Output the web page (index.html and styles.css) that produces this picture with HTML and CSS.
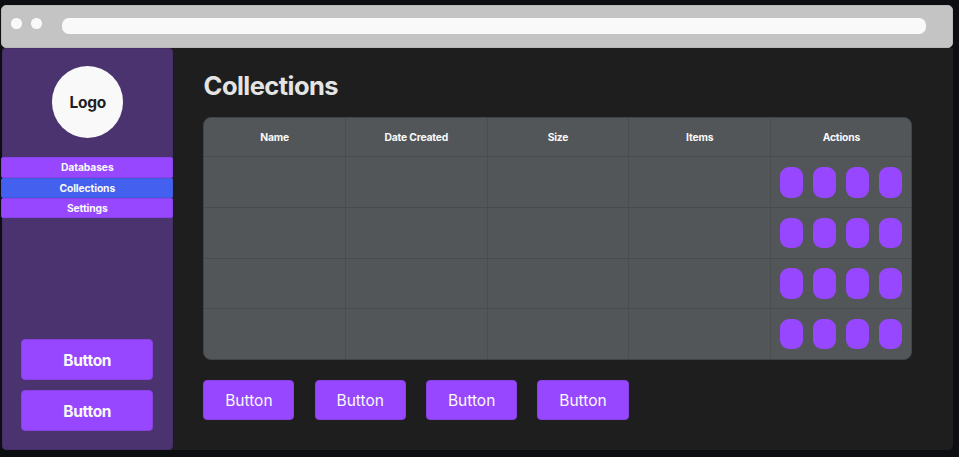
FILE: index.html
```html
<!DOCTYPE html>
<html lang="en">
<head>
<meta charset="utf-8">
<title>Collections</title>
<link rel="stylesheet" href="styles.css">
</head>
<body>
<div class="window">
  <header class="browser-bar">
    <span class="dot"></span>
    <span class="dot"></span>
    <div class="address"></div>
  </header>
  <div class="app">
    <aside class="sidebar">
      <div class="logo">Logo</div>
      <nav class="nav">
        <a class="nav-item">Databases</a>
        <a class="nav-item active">Collections</a>
        <a class="nav-item">Settings</a>
      </nav>
      <div class="side-actions">
        <button class="btn btn-side">Button</button>
        <button class="btn btn-side">Button</button>
      </div>
    </aside>
    <main class="main">
      <h1 class="title">Collections</h1>
      <div class="table">
        <div class="row head">
          <div class="cell">Name</div><div class="cell">Date Created</div><div class="cell">Size</div><div class="cell">Items</div><div class="cell">Actions</div>
        </div>
        <div class="row">
          <div class="cell"></div><div class="cell"></div><div class="cell"></div><div class="cell"></div>
          <div class="cell actions"><i class="pill"></i><i class="pill"></i><i class="pill"></i><i class="pill"></i></div>
        </div>
        <div class="row">
          <div class="cell"></div><div class="cell"></div><div class="cell"></div><div class="cell"></div>
          <div class="cell actions"><i class="pill"></i><i class="pill"></i><i class="pill"></i><i class="pill"></i></div>
        </div>
        <div class="row">
          <div class="cell"></div><div class="cell"></div><div class="cell"></div><div class="cell"></div>
          <div class="cell actions"><i class="pill"></i><i class="pill"></i><i class="pill"></i><i class="pill"></i></div>
        </div>
        <div class="row">
          <div class="cell"></div><div class="cell"></div><div class="cell"></div><div class="cell"></div>
          <div class="cell actions"><i class="pill"></i><i class="pill"></i><i class="pill"></i><i class="pill"></i></div>
        </div>
      </div>
      <div class="toolbar">
        <button class="btn">Button</button>
        <button class="btn">Button</button>
        <button class="btn">Button</button>
        <button class="btn">Button</button>
      </div>
    </main>
  </div>
</div>
</body>
</html>
```

FILE: styles.css
```css
* {
  box-sizing: border-box;
}

body {
  margin: 0;
  height: 457px;
  overflow: hidden;
  background: #0d0e12;
  font-family: Inter, "Liberation Sans", sans-serif;
  color: #f9f9f9;
}

.window {
  width: 951.7px;
  margin-left: 1.2px;
  padding-top: 5.3px;
}

.browser-bar {
  display: flex;
  height: 42.4px;
  padding: 12.2px 25.7px 0 9px;
  border: 1px solid #b8b8b8;
  border-radius: 5px;
  background: #c4c4c4;
}

.dot {
  flex: none;
  width: 10.4px;
  height: 10.4px;
  margin-right: 9.8px;
  border-radius: 50%;
  background: #f9f9f9;
}

.address {
  flex: 1;
  height: 15.6px;
  margin-left: 10.2px;
  border-radius: 7px;
  background: #f9f9f9;
}

.app {
  display: flex;
  height: 402.3px;
  margin-left: 0.8px;
  border-radius: 0 0 5px 5px;
  background: #1e1e1e;
}

.sidebar {
  display: flex;
  flex: none;
  flex-direction: column;
  width: 171.4px;
  padding: 17.5px 0 18.4px;
  border: 1px solid #452f67;
  border-radius: 4px;
  background: #4b3370;
}

.logo {
  display: flex;
  align-items: center;
  justify-content: center;
  width: 71.4px;
  height: 71.4px;
  margin: 0 auto;
  padding-top: 1px;
  border-radius: 50%;
  background: #f9f9f9;
  color: #1e1e1e;
  font-size: 15.5px;
  font-weight: 700;
  letter-spacing: -0.3px;
}

.nav {
  margin: 19.8px -1px 0 -1.8px;
}

.nav-item {
  display: block;
  height: 20.25px;
  border: 1px solid #8842ea;
  border-radius: 2px;
  background: #9747ff;
  font-size: 10.3px;
  font-weight: 700;
  letter-spacing: -0.1px;
  line-height: 19px;
  text-align: center;
}

.nav-item.active {
  border-color: #405bdc;
  background: #4361ee;
}

.side-actions {
  display: grid;
  gap: 10px;
  margin: auto 19.2px 0 18.3px;
}

.btn {
  width: 91.2px;
  height: 40.6px;
  padding: 2px 0 0;
  border: 1px solid #8742e1;
  border-radius: 4px;
  background: #9747ff;
  color: #f9f9f9;
  font: 400 15.5px/1 Inter, "Liberation Sans", sans-serif;
}

.btn-side {
  width: 100%;
  font-weight: 700;
  letter-spacing: -0.3px;
}

.main {
  padding: 22.5px 0 0 29.9px;
}

.title {
  height: 46.8px;
  margin: 0 0 0 0.3px;
  color: #e4e4e4;
  font-size: 25.5px;
  font-weight: 700;
  letter-spacing: -0.55px;
  line-height: 32px;
}

.table {
  width: 708.8px;
  height: 242.6px;
  overflow: hidden;
  border: 1px solid #424547;
  border-radius: 8px;
  background: #525659;
}

.row {
  display: grid;
  grid-template-columns: repeat(5, 141.7px);
  height: 50.6px;
  margin-left: -1px;
  border-top: 1px solid #484b4e;
}

.row.head {
  height: 38.5px;
  border-top: 0;
}

.cell {
  display: flex;
  align-items: center;
  justify-content: center;
  border-left: 1px solid #4a4d50;
  font-size: 10.3px;
  font-weight: 700;
  letter-spacing: -0.17px;
}

.actions {
  gap: 10.6px;
  padding-right: 0.8px;
}

.pill {
  width: 22.5px;
  height: 30.7px;
  border-radius: 9px;
  background: #9747ff;
}

.toolbar {
  display: flex;
  gap: 20.2px;
  margin-top: 20px;
}
```
